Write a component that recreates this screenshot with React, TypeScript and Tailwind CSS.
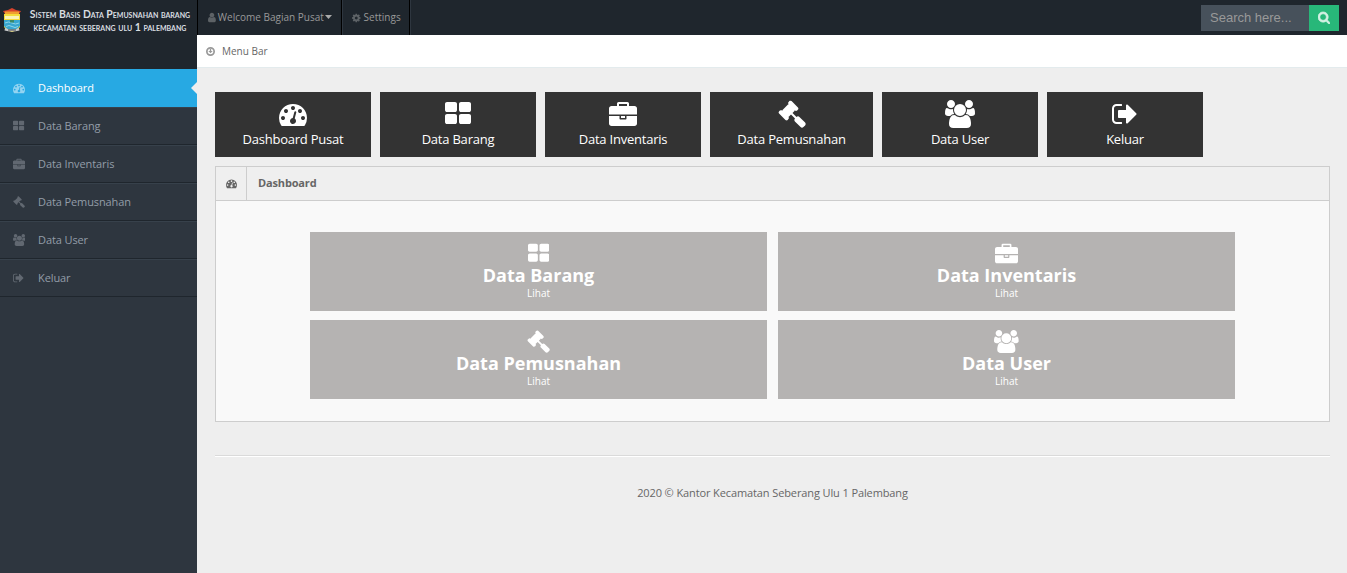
import React from "react";

type IconName = "gauge" | "grid" | "briefcase" | "gavel" | "users" | "signout" | "user" | "cog" | "arrow" | "search";

const ICONS: Record<IconName, { w: number; box: string; d: string }> = {
  gauge: {
    w: 1792,
    box: "0 0 1792 1792",
    d: "M384 1152q0-53-37.5-90.5t-90.5-37.5-90.5 37.5-37.5 90.5 37.5 90.5 90.5 37.5 90.5-37.5 37.5-90.5zm192-448q0-53-37.5-90.5t-90.5-37.5-90.5 37.5-37.5 90.5 37.5 90.5 90.5 37.5 90.5-37.5 37.5-90.5zm428 481l101-382q6-26-7.5-48.5t-38.5-29.5-48 6.5-30 39.5l-101 382q-60 5-107 43.5t-63 98.5q-20 77 20 146t117 89 146-20 89-117q16-60-6-117t-72-91zm660-33q0-53-37.5-90.5t-90.5-37.5-90.5 37.5-37.5 90.5 37.5 90.5 90.5 37.5 90.5-37.5 37.5-90.5zm-640-640q0-53-37.5-90.5t-90.5-37.5-90.5 37.5-37.5 90.5 37.5 90.5 90.5 37.5 90.5-37.5 37.5-90.5zm448 192q0-53-37.5-90.5t-90.5-37.5-90.5 37.5-37.5 90.5 37.5 90.5 90.5 37.5 90.5-37.5 37.5-90.5zm320 448q0 261-141 483-19 29-54 29h-1402q-35 0-54-29-141-221-141-483 0-182 71-348t191-286 286-191 348-71 348 71 286 191 191 286 71 348z",
  },
  grid: {
    w: 1664,
    box: "64 0 1664 1792",
    d: "M832 1024v384q0 52-38 90t-90 38h-512q-52 0-90-38t-38-90v-384q0-52 38-90t90-38h512q52 0 90 38t38 90zm0-768v384q0 52-38 90t-90 38h-512q-52 0-90-38t-38-90v-384q0-52 38-90t90-38h512q52 0 90 38t38 90zm896 768v384q0 52-38 90t-90 38h-512q-52 0-90-38t-38-90v-384q0-52 38-90t90-38h512q52 0 90 38t38 90zm0-768v384q0 52-38 90t-90 38h-512q-52 0-90-38t-38-90v-384q0-52 38-90t90-38h512q52 0 90 38t38 90z",
  },
  briefcase: {
    w: 1792,
    box: "0 -128 1792 1792",
    d: "M640 256h512v-128h-512v128zm1152 640v480q0 66-47 113t-113 47h-1472q-66 0-113-47t-47-113v-480h672v160q0 26 19 45t45 19h320q26 0 45-19t19-45v-160h672zm-768 0v128h-256v-128h256zm768-480v384h-1792v-384q0-66 47-113t113-47h352v-160q0-40 28-68t68-28h576q40 0 68 28t28 68v160h352q66 0 113 47t47 113z",
  },
  gavel: {
    w: 1792,
    box: "0 0 1792 1792",
    d: "M1771 1536q0 53-37 90l-107 108q-39 37-91 37-53 0-90-37l-363-364q-38-36-38-90 0-53 43-96l-256-256-126 126q-14 14-34 14t-34-14q2 2 12.5 12t12.5 13 10 11.5 10 13.5 6 13.5 5.5 16.5 1.5 18q0 38-28 68-3 3-16.5 18t-19 20.5-18.5 16.5-22 15.5-22 9-26 4.5q-40 0-68-28l-408-408q-28-28-28-68 0-13 4.5-26t9-22 15.5-22 16.5-18.5 20.5-19 18-16.5q30-28 68-28 10 0 18 1.5t16.5 5.5 13.5 6 13.5 10 11.5 10 13 12.5 12 12.5q-14-14-14-34t14-34l348-348q14-14 34-14t34 14q-2-2-12.5-12t-12.5-13-10-11.5-10-13.5-6-13.5-5.5-16.5-1.5-18q0-38 28-68 3-3 16.5-18t19-20.5 18.5-16.5 22-15.5 22-9 26-4.5q40 0 68 28l408 408q28 28 28 68 0 13-4.5 26t-9 22-15.5 22-16.5 18.5-20.5 19-18 16.5q-30 28-68 28-10 0-18-1.5t-16.5-5.5-13.5-6-13.5-10-11.5-10-13-12.5-12-12.5q14 14 14 34t-14 34l-126 126 256 256q43-43 96-43 52 0 91 37l363 363q37 39 37 91z",
  },
  users: {
    w: 1920,
    box: "64 0 1920 1792",
    d: "M657 896q-162 5-265 128h-134q-82 0-138-40.5t-56-118.5q0-353 124-353 6 0 43.5 21t97.5 42.5 119 21.5q67 0 133-23-5 37-5 66 0 139 81 256zm1071 637q0 120-73 189.5t-194 69.5h-874q-121 0-194-69.5t-73-189.5q0-53 3.5-103.5t14-109 26.5-108.5 43-97.5 62-81 85.5-53.5 111.5-20q10 0 43 21.5t73 48 107 48 135 21.5 135-21.5 107-48 73-48 43-21.5q61 0 111.5 20t85.5 53.5 62 81 43 97.5 26.5 108.5 14 109 3.5 103.5zm-1024-1277q0 106-75 181t-181 75-181-75-75-181 75-181 181-75 181 75 75 181zm704 384q0 159-112.5 271.5t-271.5 112.5-271.5-112.5-112.5-271.5 112.5-271.5 271.5-112.5 271.5 112.5 112.5 271.5zm576 225q0 78-56 118.5t-138 40.5h-134q-103-123-265-128 81-117 81-256 0-29-5-66 66 23 133 23 59 0 119-21.5t97.5-42.5 43.5-21q124 0 124 353zm-128-609q0 106-75 181t-181 75-181-75-75-181 75-181 181-75 181 75 75 181z",
  },
  signout: {
    w: 1664,
    box: "64 0 1664 1792",
    d: "M704 1440q0 4 1 20t.5 26.5-3 23.5-10 19.5-20.5 6.5h-320q-119 0-203.5-84.5t-84.5-203.5v-704q0-119 84.5-203.5t203.5-84.5h320q13 0 22.5 9.5t9.5 22.5q0 4 1 20t.5 26.5-3 23.5-10 19.5-20.5 6.5h-320q-66 0-113 47t-47 113v704q0 66 47 113t113 47h312l11.5 1 11.5 3 8 5.5 7 9 2 13.5zm928-544q0 26-19 45l-544 544q-19 19-45 19t-45-19-19-45v-288h-448q-26 0-45-19t-19-45v-384q0-26 19-45t45-19h448v-288q0-26 19-45t45-19 45 19l544 544q19 19 19 45z",
  },
  user: {
    w: 1280,
    box: "256 0 1280 1792",
    d: "M1536 1399q0 109-62.500 187t-150.500 78h-854q-88 0-150.500-78t-62.500-187q0-85 8.500-160.500t31.500-152 58.500-131 94-89 134.500-34.500q131 128 313 128t313-128q76 0 134.500 34.500t94 89 58.500 131 31.500 152 8.500 160.500zm-256-887q0 159-112.500 271.500t-271.500 112.500-271.500-112.500-112.500-271.500 112.500-271.500 271.500-112.500 271.500 112.500 112.500 271.500z",
  },
  cog: {
    w: 1536,
    box: "128 0 1536 1792",
    d: "M1152 896q0-106-75-181t-181-75-181 75-75 181 75 181 181 75 181-75 75-181zm512-109v222q0 12-8 23t-20 13l-185 28q-19 54-39 91 35 50 107 138 10 12 10 25t-9 23q-27 37-99 108t-94 71q-12 0-26-9l-138-108q-44 23-91 38-16 136-29 186-7 28-36 28h-222q-14 0-24.500-8.500t-11.500-21.500l-28-184q-49-16-90-37l-141 107q-10 9-25 9-14 0-25-11-126-114-165-168-7-10-7-23 0-12 8-23 15-21 51-66.500t54-70.500q-27-50-41-99l-183-27q-13-2-21-12.500t-8-23.500v-222q0-12 8-23t19-13l186-28q14-46 39-92-40-57-107-138-10-12-10-24 0-10 9-23 26-36 98.500-107.500t94.500-71.500q13 0 26 10l138 107q44-23 91-38 16-136 29-186 7-28 36-28h222q14 0 24.500 8.500t11.500 21.500l28 184q49 16 90 37l142-107q9-9 24-9 13 0 25 10 129 119 165 170 7 8 7 22 0 12-8 23-15 21-51 66.500t-54 70.500q26 50 41 98l183 28q13 2 21 12.500t8 23.500z",
  },
  arrow: {
    w: 1536,
    box: "128 128 1536 1536",
    d: "M896 128a768 768 0 1 0 0 1536a768 768 0 1 0 0-1536zM896 420a476 476 0 1 1 0 952a476 476 0 1 1 0-952zM780 480h232v340h260l-376 380-376-380h260z",
  },
  search: {
    w: 1664,
    box: "64 0 1664 1792",
    d: "M1216 832q0-185-131.500-316.500t-316.500-131.500-316.500 131.500-131.500 316.500 131.500 316.500 316.500 131.500 316.500-131.500 131.500-316.500zm512 832q0 52-38 90t-90 38q-54 0-90-38l-343-342q-179 124-399 124-143 0-273.500-55.500t-225-150-150-225-55.500-273.500 55.500-273.500 150-225 225-150 273.500-55.500 273.500 55.500 225 150 150 225 55.500 273.500q0 220-124 399l343 343q37 37 37 90z",
  },
};

function Icon({ name, size, className = "" }: { name: IconName; size: number; className?: string }) {
  const icon = ICONS[name];
  const boxHeight = Number(icon.box.split(" ")[3]);
  return (
    <svg
      width={(icon.w / boxHeight) * size}
      height={size}
      viewBox={icon.box}
      fill="currentColor"
      fillRule="evenodd"
      className={`block shrink-0 ${className}`}
    >
      <path d={icon.d} />
    </svg>
  );
}

function Crest() {
  return (
    <svg width="20" height="25" viewBox="0 0 20 25" className="block shrink-0">
      <path d="M1 3l5-1 4-2 4 2 5 1-2 3H3z" fill="#d8432c" />
      <path d="M3 3.500h14v3H3z" fill="#f0a030" />
      <path d="M2 6h16v13q-2 3-8 5q-6-2-8-5z" fill="#f4dc3c" />
      <path d="M3 8h14v3H3z" fill="#f9f3b8" />
      <path d="M2 12h16v6q-3 4-8 4.500q-5-.5-8-4.500z" fill="#38a6d0" />
      <path d="M3 15q3.500-2 7 0t7 0M4 18.500q3-2 6 0t6 0" stroke="#8fd6e6" fill="none" />
      <path d="M8 12h4v2.500H8z" fill="#3a8a68" />
      <path d="M3 20q7 3 14 0l.5 2.500q-7.500 2-15 0z" fill="#c9cccd" />
      <path d="M6 21.500h8v1H6z" fill="#444" />
    </svg>
  );
}

const MENU: { icon: IconName; label: string }[] = [
  { icon: "grid", label: "Data Barang" },
  { icon: "briefcase", label: "Data Inventaris" },
  { icon: "gavel", label: "Data Pemusnahan" },
  { icon: "users", label: "Data User" },
  { icon: "signout", label: "Keluar" },
];

function Sidebar() {
  return (
    <aside className="flex w-[197px] shrink-0 flex-col bg-[#2e363f]">
      <div className="flex h-[69px] bg-[#1f262d] pt-2 pl-[2px]">
        <Crest />
        <div className="flex w-[175px] flex-col items-center pl-px font-['Lato'] font-bold whitespace-nowrap text-[#d9dde0] [font-variant:small-caps]">
          <div className="h-[13px] text-[10.45px] leading-[13px]">Sistem Basis Data Pemusnahan barang</div>
          <div className="h-[13px] text-[10.65px] leading-[12px]">kecamatan seberang ulu 1 palembang</div>
        </div>
      </div>
      <nav className="tracking-[-0.1px]">
        <div className="flex h-[38px] items-center bg-[#27a9e3] pl-[13px] text-white">
          <span className="w-[25px] opacity-50">
            <Icon name="gauge" size={12} />
          </span>
          <span className="grow">Dashboard</span>
          <svg width="6" height="12" viewBox="0 0 6 12" className="block">
            <path d="M6 0v12L0 6z" fill="#eee" />
          </svg>
        </div>
        {MENU.map((m) => (
          <div
            key={m.label}
            className="flex h-[38px] items-center border-t border-b border-t-[#37414b] border-b-[#1f262d] pl-[13px] text-[#939da8]"
          >
            <span className="flex w-[25px] text-[#616871]">
              <span className="flex w-3 justify-center">
                <Icon name={m.icon} size={12} />
              </span>
            </span>
            <span>{m.label}</span>
          </div>
        ))}
      </nav>
    </aside>
  );
}

const TILES: { icon: IconName; label: string; width: string }[] = [
  { icon: "gauge", label: "Dashboard Pusat", width: "w-[156px]" },
  { icon: "grid", label: "Data Barang", width: "w-[156px]" },
  { icon: "briefcase", label: "Data Inventaris", width: "w-[156px]" },
  { icon: "gavel", label: "Data Pemusnahan", width: "w-[163px]" },
  { icon: "users", label: "Data User", width: "w-[156px]" },
  { icon: "signout", label: "Keluar", width: "w-[156px]" },
];

export default function App() {
  return (
    <div className="flex h-[573px] w-[1347px] overflow-hidden bg-[#eee] font-['Open_Sans',sans-serif] text-[11px] text-[#666]">
      <Sidebar />
      <div className="flex min-w-0 grow flex-col">
        <header className="flex h-[35px] bg-[#1f262d] text-[10px] text-[#999]">
          <div className="flex w-[145px] items-center border-r border-l border-r-black border-l-black pl-[10px]">
            <Icon name="user" size={11} className="mr-[2px] text-[#5d6266]" />
            <span className="text-[10px] whitespace-nowrap">Welcome Bagian Pusat</span>
            <svg width="7" height="4" viewBox="0 0 7 4" className="-mt-[2px] ml-px block">
              <path d="M0 0h7L3.500 4z" fill="#aaa" />
            </svg>
          </div>
          <div className="flex w-[68px] items-center border-r border-l border-r-black border-l-[#2e363f] pl-[9px]">
            <Icon name="cog" size={10} className="mr-[3px] text-[#5d6266]" />
            <span className="text-[10px]">Settings</span>
          </div>
          <div className="w-px bg-[#2e363f]" />
          <div className="mt-[5px] mr-2 ml-auto flex h-[26px]">
            <div className="w-[108px] bg-[#47515b] pl-[9px] font-['Liberation_Sans'] text-[13px] leading-[25px] text-[#999]">
              Search here...
            </div>
            <div className="flex w-[30px] items-center justify-center bg-[#28b779] pb-px text-[#d4f1e4]">
              <Icon name="search" size={13} className="stroke-current stroke-[90]" />
            </div>
          </div>
        </header>
        <div className="flex h-[33px] items-center border-b border-[#e3ebed] bg-white pl-[9px]">
          <Icon name="arrow" size={9} className="mr-[7px] text-[#999]" />
          <span className="text-[10px]">Menu Bar</span>
        </div>
        <main className="flex flex-col pt-6 pr-[17px] pl-[18px]">
          <div className="flex gap-[9px]">
            {TILES.map((t) => (
              <div key={t.label} className={`flex h-[65px] flex-col items-center bg-[#333] pt-2 text-white ${t.width}`}>
                <Icon name={t.icon} size={28} />
                <span className="mt-[2px] text-[13px] leading-[18px] tracking-[-0.22px] whitespace-nowrap">{t.label}</span>
              </div>
            ))}
          </div>
          <section className="mt-[9px] h-[256px] border border-[#cdcdcd] bg-[#f9f9f9]">
            <div className="flex h-[34px] border-b border-[#cdcdcd] bg-[#efefef]">
              <div className="flex w-[31px] justify-center border-r border-[#cdcdcd] pt-[11px]">
                <Icon name="gauge" size={11} />
              </div>
              <h5 className="pl-[11px] text-[11px] leading-[32px] font-bold tracking-[-0.15px]">Dashboard</h5>
            </div>
            <div className="grid grid-cols-[457px_457px] gap-x-[11px] gap-y-[9px] pt-[31px] pl-[94px]">
              {MENU.slice(0, 4).map((m) => (
                <div key={m.label} className="flex h-[79px] flex-col items-center bg-[#b5b3b2] pt-[10px] text-white">
                  <Icon name={m.icon} size={23} />
                  <strong className="-mt-[2px] text-[18px] leading-[24px] font-bold">{m.label}</strong>
                  <span className="text-[10px] leading-[13px]">Lihat</span>
                </div>
              ))}
            </div>
          </section>
          <hr className="mt-[33px] h-[2px] border-t border-b border-t-[#dadada] border-b-white" />
          <footer className="mt-[26px] text-center leading-5 tracking-[-0.11px]">
            2020 © Kantor Kecamatan Seberang Ulu 1 Palembang
          </footer>
        </main>
      </div>
    </div>
  );
}
